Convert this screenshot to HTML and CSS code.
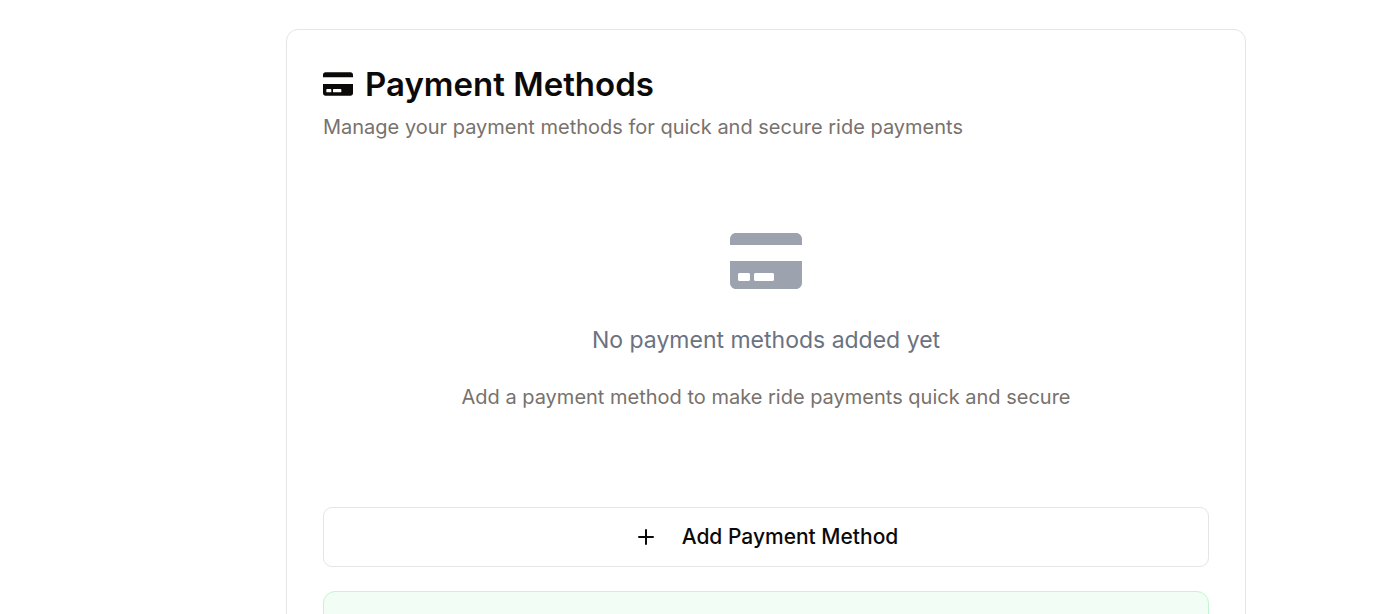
FILE: index.html
```html
<!DOCTYPE html>
<html lang="en">
<head>
<meta charset="utf-8">
<meta name="viewport" content="width=device-width, initial-scale=1">
<title>Payment Methods</title>
<link rel="stylesheet" href="styles.css">
</head>
<body>
<svg class="sprite" aria-hidden="true">
  <symbol id="credit-card" viewBox="0 0 576 512"><path d="M0 432c0 26.500 21.500 48 48 48h480c26.500 0 48-21.500 48-48V256H0v176zm192-68c0-6.600 5.400-12 12-12h136c6.600 0 12 5.400 12 12v40c0 6.600-5.400 12-12 12H204c-6.600 0-12-5.400-12-12v-40zm-128 0c0-6.600 5.400-12 12-12h72c6.600 0 12 5.400 12 12v40c0 6.600-5.400 12-12 12H76c-6.600 0-12-5.400-12-12v-40zM576 80v48H0V80c0-26.500 21.500-48 48-48h480c26.500 0 48 21.500 48 48z"/></symbol>
</svg>
<main class="page">
  <section class="card">
    <header class="card-header">
      <h1 class="card-title">
        <svg class="title-icon" aria-hidden="true"><use href="#credit-card"/></svg>
        Payment Methods
      </h1>
      <p class="description">Manage your payment methods for quick and secure ride payments</p>
    </header>
    <div class="empty">
      <svg class="empty-icon" aria-hidden="true"><use href="#credit-card"/></svg>
      <p class="empty-title">No payment methods added yet</p>
      <p class="description">Add a payment method to make ride payments quick and secure</p>
    </div>
    <button class="add-button" type="button">
      <svg class="plus-icon" viewBox="0 0 24 24" aria-hidden="true"><path d="M5 12h14M12 5v14"/></svg>
      Add Payment Method
    </button>
    <div class="notice"></div>
  </section>
</main>
</body>
</html>
```
FILE: styles.css
```css
* {
  box-sizing: border-box;
}

body {
  margin: 0;
  background: #fff;
  color: #0c0a09;
  font-family: Inter, "Liberation Sans", sans-serif;
  overflow: hidden;
}

h1,
p {
  margin: 0;
}

.sprite {
  position: absolute;
  width: 0;
  height: 0;
}

.page {
  padding: 29px 146px 0 286px;
}

.card {
  display: flex;
  flex-direction: column;
  max-width: 960px;
  padding: 36px;
  border: 1px solid #e5e5e5;
  border-radius: 12px;
}

.card-header {
  display: flex;
  flex-direction: column;
  gap: 11px;
}

.card-title {
  display: flex;
  align-items: center;
  gap: 12px;
  font-size: 33px;
  font-weight: 600;
  line-height: 36px;
}

.title-icon {
  width: 30px;
  height: 30px;
  fill: currentColor;
}

.description {
  color: #78716c;
  font-size: 20px;
  line-height: 28px;
}

.empty {
  display: flex;
  flex-direction: column;
  align-items: center;
  gap: 24px;
  padding: 84px 0 96px;
  text-align: center;
}

.empty-icon {
  width: 72px;
  height: 72px;
  fill: #9ca3af;
}

.empty-title {
  color: #6b7280;
  font-size: 23px;
  line-height: 38px;
}

.add-button {
  display: flex;
  align-items: center;
  justify-content: center;
  gap: 24px;
  height: 60px;
  border: 1px solid #e5e5e5;
  border-radius: 9px;
  background: #fff;
  color: #0c0a09;
  font-family: inherit;
  font-size: 21px;
  font-weight: 500;
  line-height: 30px;
}

.plus-icon {
  width: 24px;
  height: 24px;
  fill: none;
  stroke: currentColor;
  stroke-width: 2;
  stroke-linecap: round;
}

.notice {
  min-height: 48px;
  margin-top: 24px;
  border: 1px solid #c4f5d3;
  border-radius: 12px;
  background: #f2fdf5;
}
```
